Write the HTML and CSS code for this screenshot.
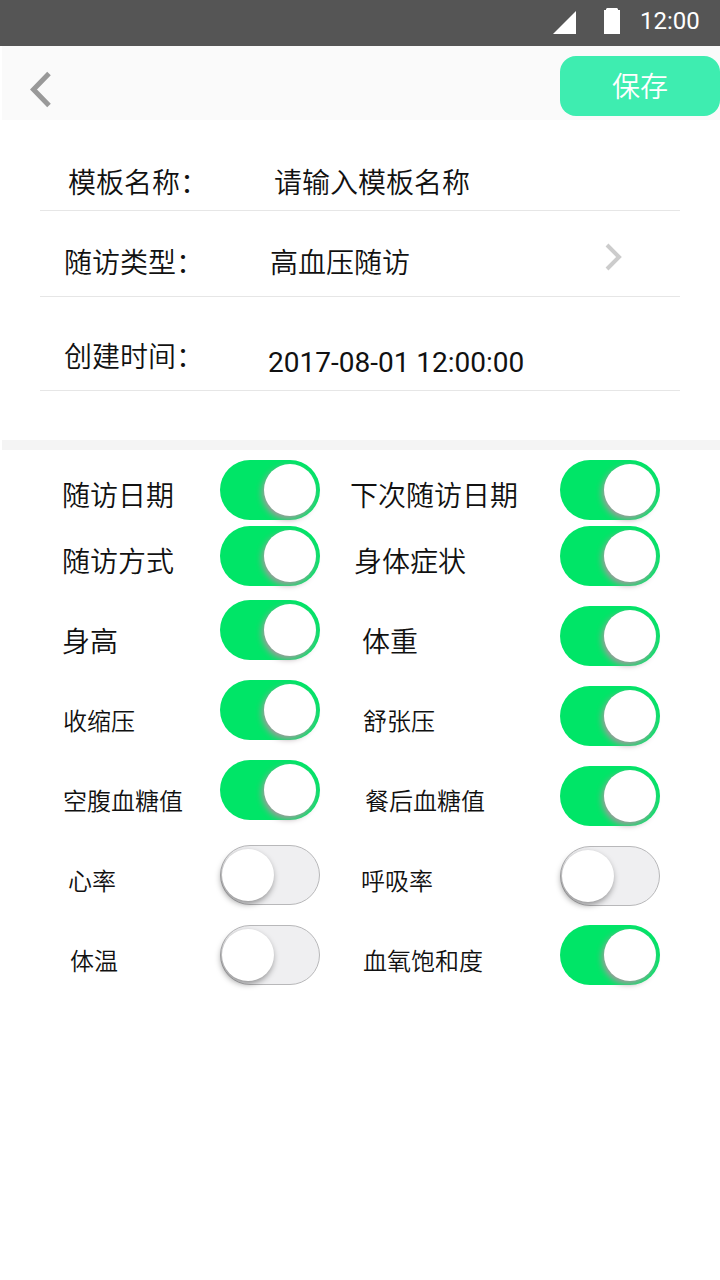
FILE: index.html
```html
<!DOCTYPE html>
<html lang="zh-CN">
<head>
<meta charset="utf-8">
<title>随访模板</title>
<link rel="stylesheet" href="styles.css">
</head>
<body>
<div class="status">
  <svg class="signal" width="23" height="23" viewBox="0 0 23 23"><path d="M23 0V23H0Z" fill="#fff"/></svg>
  <svg class="battery" width="16" height="26" viewBox="0 0 16 26"><path d="M2 2V1l1-1H13l1 1V2H16V26H0V2Z" fill="#fff"/></svg>
  <span class="clock">12:00</span>
</div>
<header class="header">
  <svg class="back" width="24" height="40" viewBox="0 0 24 40"><path d="M20 4.500 4.500 20.500 20 36.500" fill="none" stroke="#999" stroke-width="5"/></svg>
  <button class="save">保存</button>
</header>
<main>
  <section class="form">
    <div class="field name"><span class="key">模板名称：</span><span class="value">请输入模板名称</span></div>
    <div class="field type"><span class="key">随访类型：</span><span class="value">高血压随访</span>
      <svg class="more" width="20" height="30" viewBox="0 0 20 30"><path d="M3 3 15 15 3 27" fill="none" stroke="#ccc" stroke-width="4"/></svg>
    </div>
    <div class="field time"><span class="key">创建时间：</span><span class="value date">2017-08-01 12:00:00</span></div>
  </section>
  <section class="options">
    <div class="row first"><span class="label">随访日期</span><i class="toggle on"></i><span class="label next">下次随访日期</span><i class="toggle on"></i></div>
    <div class="row first"><span class="label">随访方式</span><i class="toggle on"></i><span class="label body">身体症状</span><i class="toggle on"></i></div>
    <div class="row spaced"><span class="label">身高</span><i class="toggle on raised"></i><span class="label weight">体重</span><i class="toggle on"></i></div>
    <div class="row small"><span class="label">收缩压</span><i class="toggle on raised"></i><span class="label weight">舒张压</span><i class="toggle on"></i></div>
    <div class="row small"><span class="label">空腹血糖值</span><i class="toggle on raised"></i><span class="label meal">餐后血糖值</span><i class="toggle on"></i></div>
    <div class="row small"><span class="label heart">心率</span><i class="toggle nudged"></i><span class="label breath">呼吸率</span><i class="toggle"></i></div>
    <div class="row small"><span class="label temp">体温</span><i class="toggle nudged"></i><span class="label weight">血氧饱和度</span><i class="toggle on nudged"></i></div>
  </section>
</main>
</body>
</html>
```
FILE: styles.css
```css
* { box-sizing: border-box; }
body {
  margin: 0;
  min-height: 1280px;
  background: #fff;
  color: #111;
  font-family: "Noto Sans CJK SC", sans-serif;
  font-weight: 350;
  font-size: 28px;
  white-space: nowrap;
}
svg { display: block; flex: none; }

.status {
  display: flex;
  height: 46px;
  padding-left: 553px;
  background: #555;
  color: #fff;
}
.signal { margin-top: 11px; }
.battery { margin: 8px 0 0 28px; }
.clock { margin-left: 20px; font: 400 24px/42px Roboto, sans-serif; }

.header {
  display: flex;
  justify-content: space-between;
  height: 74px;
  margin-left: 2px;
  padding-left: 27px;
  background: #fafafa;
}
.back { margin-top: 23px; }
.save {
  width: 160px;
  height: 60px;
  margin-top: 10px;
  padding: 0 0 2px;
  border: 0;
  border-radius: 16px;
  background: #3eedb0;
  color: #fff;
  font: 350 28px/58px "Noto Sans CJK SC", sans-serif;
}

.form { height: 320px; padding: 0 40px; }
.field {
  display: grid;
  grid-template-columns: 206px 1fr 76px;
  padding-left: 24px;
  border-bottom: 1px solid #e6e6e6;
  line-height: 40px;
}
.name { height: 91px; padding: 41px 0 0 28px; }
.type { height: 86px; padding-top: 30px; }
.time { height: 94px; padding-top: 38px; grid-template-columns: 204px 1fr; }
.more { margin-top: 1px; }
.date { padding-top: 8px; font: 400 28px/40px Roboto, sans-serif; }

.options {
  margin-left: 2px;
  border-top: 10px solid #f4f4f4;
  padding: 10px 0 0 60px;
}
.row {
  display: grid;
  grid-template-columns: 158px 140px 200px 100px;
  height: 80px;
}
.first { height: 66px; }
.spaced { margin-top: 14px; }
.label { padding-top: 4px; line-height: 60px; }
.small { font-size: 24px; }
.small .label { padding-left: 1px; }
.label.next { margin-left: -10px; }
.label.body { margin-left: -6px; }
.label.weight { padding-left: 2px; }
.small .label.weight { padding-left: 3px; }
.small .label.meal { padding-left: 5px; }
.small .label.heart { padding-left: 6px; }
.small .label.breath { padding-left: 1px; }
.small .label.temp { padding-left: 8px; }

.toggle {
  display: block;
  width: 100px;
  height: 60px;
  padding: 3px 1px;
  border: 1px solid #b8b8ba;
  border-radius: 30px;
  background: #efeff1;
}
.toggle::before {
  content: "";
  display: block;
  width: 52px;
  height: 52px;
  border-radius: 50%;
  background: #fff;
  box-shadow: -1px 3px 6px rgba(0, 0, 0, .4);
}
.toggle.on { padding: 4px 4px 4px 44px; border: 0; background: #00e567; }
.toggle.on::before { box-shadow: -2px 3px 6px #a8989f; }
.raised { margin-top: -6px; }
.nudged { margin-top: -1px; }
```
